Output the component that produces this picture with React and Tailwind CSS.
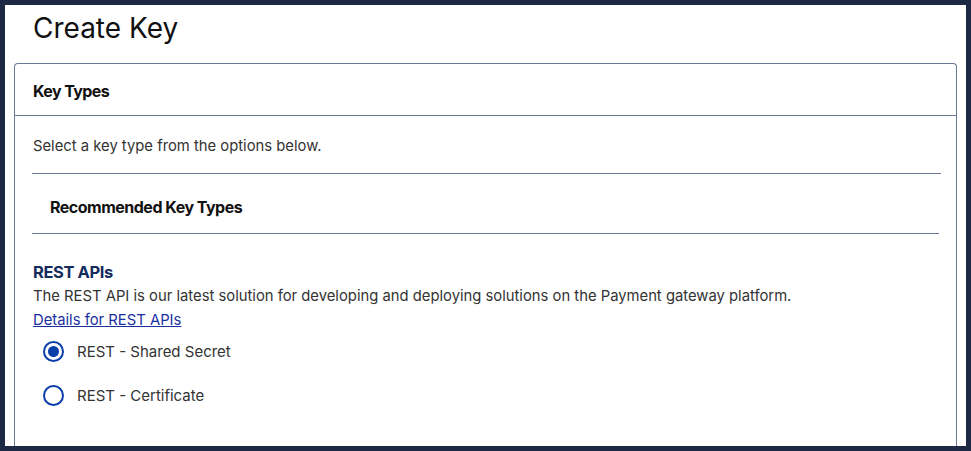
export default function App() {
  const font = { fontFamily: 'Inter, "Noto Sans", sans-serif' };
  return (
    <div className="h-[451px] w-[971px] bg-[#1e2a45] p-[5px]" style={font}>
      <div className="h-full bg-white px-[9px] overflow-hidden flex flex-col">
        <h1 className="pl-[19px] pt-[6px] text-[28px] leading-[34px] font-normal text-[#111]">Create Key</h1>
        <div className="mt-[18px] flex-1 rounded-t-[4px] border border-b-0 border-[#6b7896]">
          <div className="h-[52px] border-b border-[#6b7896] px-[18px] pt-[17px]">
            <span className="block text-[16px] leading-[20px] font-bold text-[#111] tracking-[-0.6px]">Key Types</span>
          </div>
          <div className="pt-[20px]">
            <p className="px-[18px] text-[14.8px] leading-[20px] text-[#333]">Select a key type from the options below.</p>
            <div className="ml-[17px] mr-[15px] mt-[17px] border-t border-[#6b7896]"></div>
            <div className="h-[59px] pl-[35px] pt-[23px]">
              <span className="block text-[16px] leading-[20px] font-bold text-[#111] tracking-[-0.5px]">Recommended Key Types</span>
            </div>
            <div className="ml-[17px] mr-[17px] border-t border-[#6b7896]"></div>
            <div className="px-[18px] pt-[28px]">
              <h2 className="text-[16.5px] leading-[20px] font-bold text-[#142b5c] tracking-[-0.4px]">REST APIs</h2>
              <p className="mt-[4px] text-[14.8px] leading-[21px] text-[#333]">The REST API is our latest solution for developing and deploying solutions on the Payment gateway platform.</p>
              <a href="#" className="inline-block text-[14.8px] leading-[21px] text-[#1a2fa0] underline">Details for REST APIs</a>
              <div className="mt-[10px] flex flex-col gap-[23px] pl-[10px]">
                <label className="flex items-center gap-[13px] h-[21px]">
                  <span className="w-[21px] h-[21px] rounded-full border-2 border-[#0a3ea8] flex items-center justify-center">
                    <span className="w-[11px] h-[11px] rounded-full bg-[#0a3ea8]"></span>
                  </span>
                  <span className="text-[15px] leading-[20px] text-[#333]">REST - Shared Secret</span>
                </label>
                <label className="flex items-center gap-[13px] h-[21px]">
                  <span className="w-[21px] h-[21px] rounded-full border-2 border-[#0a3ea8]"></span>
                  <span className="text-[15px] leading-[20px] text-[#333]">REST - Certificate</span>
                </label>
              </div>
            </div>
          </div>
        </div>
      </div>
    </div>
  );
}
